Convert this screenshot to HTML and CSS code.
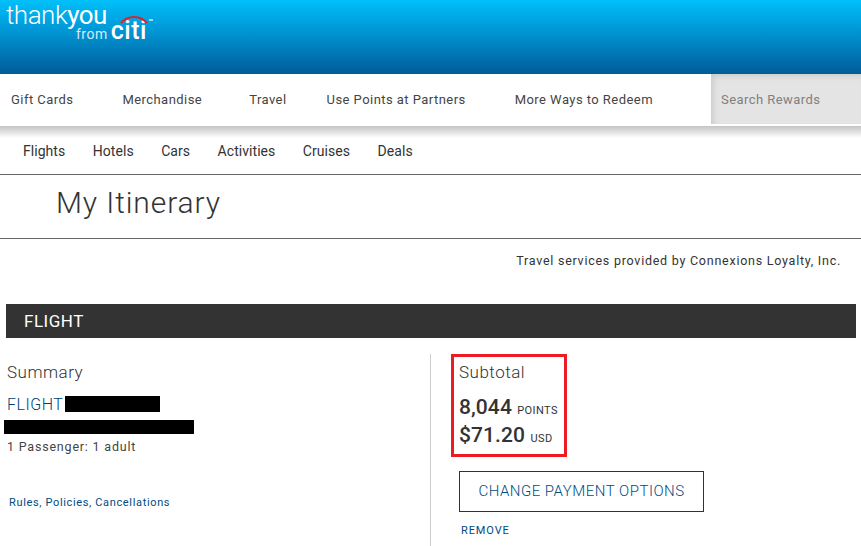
FILE: index.html
```html
<!DOCTYPE html>
<html lang="en">
<head>
    <meta charset="UTF-8">
    <title>My Itinerary</title>
    <link rel="stylesheet" href="styles.css">
</head>
<body>
    <header class="brand-bar">
        <div class="logo">
            <div class="logo-top"><span class="logo-thank">thank</span><span class="logo-you">you</span></div>
            <div class="logo-bottom">
                <span class="logo-from">from</span>
                <span class="logo-citi">citi</span>
                <svg class="logo-arc" width="36" height="10" viewBox="0 0 36 10">
                    <path d="M1 8 C8 0 20 0 27 8" fill="none" stroke="#e31f26" stroke-width="2"/>
                    <path d="M29 5 h4" stroke="#cfe6f2" stroke-width="1.5"/>
                </svg>
            </div>
        </div>
    </header>

    <nav class="main-nav">
        <a class="main-link link-gift" href="#">Gift Cards</a>
        <a class="main-link link-merch" href="#">Merchandise</a>
        <a class="main-link link-travel" href="#">Travel</a>
        <a class="main-link link-partners" href="#">Use Points at Partners</a>
        <a class="main-link link-more" href="#">More Ways to Redeem</a>
        <div class="search-box">Search Rewards</div>
    </nav>

    <nav class="sub-nav">
        <a class="sub-link" href="#">Flights</a>
        <a class="sub-link" href="#">Hotels</a>
        <a class="sub-link" href="#">Cars</a>
        <a class="sub-link" href="#">Activities</a>
        <a class="sub-link" href="#">Cruises</a>
        <a class="sub-link" href="#">Deals</a>
    </nav>

    <div class="page-title">
        <h1>My Itinerary</h1>
    </div>

    <p class="provider">Travel services provided by Connexions Loyalty, Inc.</p>

    <div class="section-bar">FLIGHT</div>

    <div class="columns">
        <div class="col-left">
            <h2 class="col-heading">Summary</h2>
            <div class="flight-line">FLIGHT <span class="redact redact-short"></span></div>
            <div class="redact redact-long"></div>
            <div class="passengers">1 Passenger: 1 adult</div>
            <a class="rules" href="#">Rules, Policies, Cancellations</a>
        </div>
        <div class="col-right">
            <div class="subtotal">
                <h2 class="col-heading">Subtotal</h2>
                <div class="amount amount-points">8,044 <small>POINTS</small></div>
                <div class="amount">$71.20 <small>USD</small></div>
            </div>
            <a class="change-btn" href="#">CHANGE PAYMENT OPTIONS</a>
            <a class="remove" href="#">REMOVE</a>
        </div>
    </div>
</body>
</html>
```

FILE: styles.css
```css
* {
    margin: 0;
    padding: 0;
    box-sizing: border-box;
}
html, body {
    height: 546px;
    overflow: hidden;
}
body {
    background-color: #fff;
    color: #333;
    font-family: Roboto, "Noto Sans", Arial, sans-serif;
    letter-spacing: 0.5px;
}
a {
    text-decoration: none;
}
.brand-bar {
    height: 74px;
    background: linear-gradient(to bottom, #00c0fa 0%, #0093d2 45%, #005c98 100%);
    padding: 0 0 0 6px;
}
.logo {
    color: #fff;
    width: 160px;
}
.logo-top {
    font-size: 26px;
    line-height: 30px;
    letter-spacing: -0.5px;
}
.logo-thank {
    font-weight: 300;
}
.logo-you {
    font-weight: 400;
}
.logo-bottom {
    position: relative;
    display: flex;
    align-items: baseline;
    margin: -8px 0 0 70px;
}
.logo-from {
    font-size: 14px;
    line-height: 16px;
    color: #d5ecf6;
}
.logo-citi {
    font-size: 25px;
    line-height: 18px;
    font-weight: 500;
    margin-left: 3px;
}
.logo-arc {
    position: absolute;
    left: 44px;
    top: -7px;
}
.main-nav {
    display: flex;
    align-items: center;
    height: 52px;
    padding-bottom: 2px;
    font-size: 13px;
    letter-spacing: 0.45px;
    position: relative;
}
.main-nav::after {
    content: "";
    position: absolute;
    left: 0;
    right: 0;
    top: 52px;
    height: 12px;
    background: linear-gradient(to bottom, #c4c4c4, #fff);
}
.main-link {
    color: #444;
}
.link-gift { margin-left: 11px; }
.link-merch { margin-left: 49px; }
.link-travel { margin-left: 47px; }
.link-partners { margin-left: 40px; }
.link-more { margin-left: 49px; }
.search-box {
    position: absolute;
    right: 0;
    top: 0;
    width: 150px;
    height: 50px;
    padding-left: 10px;
    line-height: 52px;
    color: #808080;
    background-color: #e4e4e4;
    box-shadow: inset 4px 4px 6px -2px #c8c8c8;
}
.sub-nav {
    display: flex;
    align-items: center;
    gap: 27.5px;
    height: 49px;
    padding: 1px 0 0 23px;
    font-size: 14px;
    letter-spacing: 0.05px;
    position: relative;
    border-bottom: 1px solid #666;
}
.sub-link {
    color: #333;
}
.page-title {
    height: 64px;
    padding: 8px 0 0 56px;
    border-bottom: 1px solid #666;
}
.page-title h1 {
    font-size: 30px;
    line-height: 40px;
    font-weight: 300;
    letter-spacing: 0.9px;
    color: #333;
}
.provider {
    text-align: right;
    font-size: 12.5px;
    line-height: 18px;
    letter-spacing: 0.75px;
    margin-top: 13px;
    padding-right: 20px;
    color: #333;
}
.section-bar {
    height: 34px;
    margin: 34px 5px 0 6px;
    padding-left: 18px;
    line-height: 34px;
    font-size: 17px;
    color: #fff;
    background-color: #333;
}
.columns {
    display: flex;
    margin-top: 16px;
}
.col-left {
    width: 431px;
    height: 192px;
    padding-left: 7px;
    border-right: 1px solid #ccc;
}
.col-right {
    padding-left: 20px;
}
.col-heading {
    font-size: 17px;
    line-height: 22px;
    font-weight: 300;
    color: #333;
}
.col-left .col-heading {
    margin-top: 7px;
}
.flight-line {
    display: flex;
    align-items: center;
    gap: 2px;
    margin-top: 9px;
    height: 24px;
    font-size: 16px;
    font-weight: 300;
    color: #003f72;
}
.redact {
    display: block;
    background-color: #000;
}
.redact-short {
    width: 95px;
    height: 16px;
}
.redact-long {
    width: 190px;
    height: 14px;
    margin: 4px 0 0 -3px;
}
.passengers {
    margin-top: 4px;
    font-size: 12.5px;
    line-height: 18px;
    letter-spacing: 0.8px;
    color: #444;
}
.rules {
    display: block;
    margin: 39px 0 0 2px;
    font-size: 11px;
    line-height: 16px;
    letter-spacing: 0.65px;
    color: #004b80;
}
.subtotal {
    width: 116px;
    height: 103px;
    padding: 4px 0 0 5px;
    border: 3px solid #ed1c24;
}
.amount {
    font-size: 21px;
    line-height: 28px;
    font-weight: 500;
    color: #333;
    white-space: nowrap;
    letter-spacing: 0.1px;
}
.amount-points {
    margin-top: 10px;
}
.amount small {
    font-size: 11px;
    font-weight: 400;
    line-height: 1;
    letter-spacing: 0.4px;
}
.change-btn {
    display: block;
    width: 245px;
    height: 41px;
    margin: 14px 0 0 8px;
    line-height: 39px;
    text-align: center;
    font-size: 15px;
    font-weight: 300;
    color: #004b80;
    border: 1px solid #003f72;
}
.remove {
    display: block;
    margin: 11px 0 0 10px;
    font-size: 11px;
    line-height: 16px;
    letter-spacing: 0.9px;
    font-weight: 400;
    color: #004b80;
}
```
